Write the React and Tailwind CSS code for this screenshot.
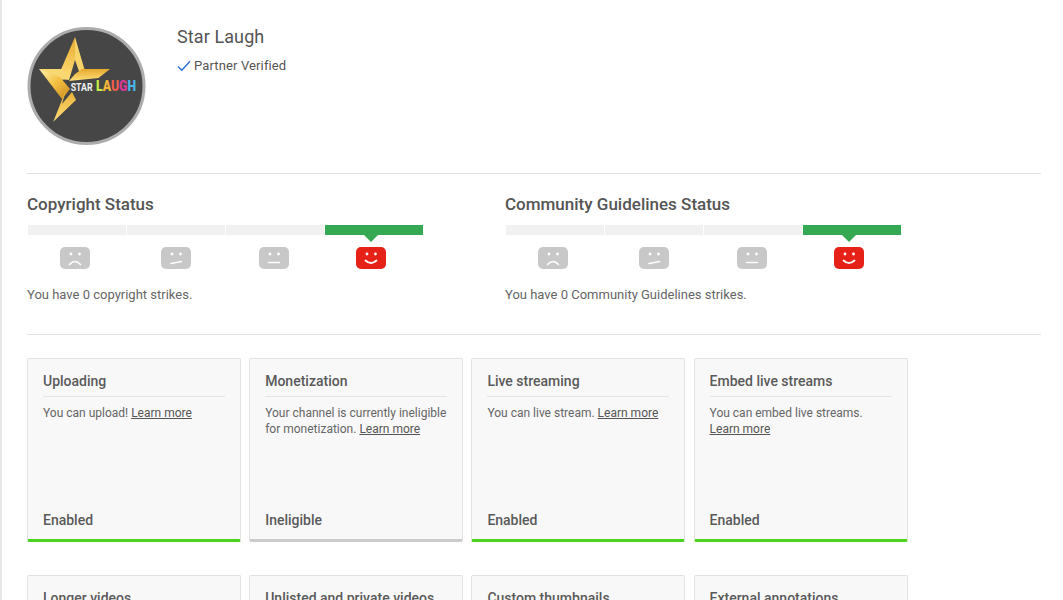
import React from "react";

const font = { fontFamily: "Roboto, sans-serif" };

// Logo del canal
const Logo = () => (
  <svg width="119" height="119" viewBox="0 0 119 119" className="block">
    <defs>
      <linearGradient id="gold" x1="0" y1="0" x2="1" y2="1">
        <stop offset="0" stopColor="#fff2b0" />
        <stop offset="0.5" stopColor="#f4c042" />
        <stop offset="1" stopColor="#c98a1c" />
      </linearGradient>
      <linearGradient id="goldDark" x1="0" y1="0" x2="0" y2="1">
        <stop offset="0" stopColor="#e6a92e" />
        <stop offset="1" stopColor="#ffdf7a" />
      </linearGradient>
    </defs>
    <circle cx="59.5" cy="59" r="57.5" fill="#464646" stroke="#acacac" strokeWidth="3" />
    <polygon points="48,10 34,42.5 31,51 42,53 48,33" fill="url(#goldDark)" />
    <polygon points="48,10 57.5,42.5 53,47 48,33" fill="#f7d46a" />
    <polygon points="55,42 83,42 71.5,51 42,54 48,47" fill="url(#goldDark)" />
    <polygon points="12,42 35,42 42,52 33,53" fill="#f8d873" />
    <polygon points="12,42 33,50 43,62 35,72" fill="url(#gold)" />
    <polygon points="40,60 26.3,94.7 49,73 45,65 35,77" fill="url(#goldDark)" />
    <text x="43.7" y="63.5" fontSize="11" fontWeight="700" fill="#f2f2f2" style={{ fontFamily: "Roboto, sans-serif" }} textLength="22" lengthAdjust="spacingAndGlyphs">STAR</text>
    <text x="69" y="64" fontSize="15" fontWeight="900" style={{ fontFamily: "Roboto, sans-serif" }} textLength="40" lengthAdjust="spacingAndGlyphs">
      <tspan fill="#c6ee48">L</tspan>
      <tspan fill="#f4b83a">A</tspan>
      <tspan fill="#ef5f4e">U</tspan>
      <tspan fill="#d8389a">G</tspan>
      <tspan fill="#4bb4e6">H</tspan>
    </text>
  </svg>
);

const bocas = {
  triste: <path d="M9.5 17.5 Q15 11.5 20.5 17.5" fill="none" stroke="#fff" strokeWidth="1.6" strokeLinecap="round" />,
  dudoso: <path d="M10 16.5 L20.5 14.5" fill="none" stroke="#fff" strokeWidth="1.6" strokeLinecap="round" />,
  neutro: <path d="M9.5 15.5 L20.5 15.5" fill="none" stroke="#fff" strokeWidth="1.6" strokeLinecap="round" />,
  feliz: <path d="M9.5 13.5 Q15 18.5 20.5 13.5" fill="none" stroke="#fff" strokeWidth="1.8" strokeLinecap="round" />,
};

const Cara = ({ tipo, className }) => (
  <svg width="30" height="22" viewBox="0 0 30 22" className={className}>
    <rect width="30" height="22" rx="5" fill={tipo === "feliz" ? "#e62117" : "#c8c8c8"} />
    <circle cx="11" cy="7" r="1.4" fill="#fff" />
    <circle cx="19.5" cy="7" r="1.4" fill="#fff" />
    {bocas[tipo]}
  </svg>
);

const Estado = ({ titulo, texto }) => (
  <div className="w-[478px]">
    <h2 className="text-[17px] leading-[20px] font-medium text-[#555]">{titulo}</h2>
    <div className="flex gap-px ml-px w-[395px] mt-[11px]">
      <div className="flex-1 h-[10px] bg-[#f1f1f1]" />
      <div className="flex-1 h-[10px] bg-[#f1f1f1]" />
      <div className="flex-1 h-[10px] bg-[#f1f1f1]" />
      <div className="flex-1 h-[10px] bg-[#34a853] relative">
        <div className="absolute left-[39px] top-[10px] w-0 h-0 border-l-[7px] border-r-[7px] border-t-[7px] border-l-transparent border-r-transparent border-t-[#34a853]" />
      </div>
    </div>
    <div className="flex mt-[12px]">
      <Cara tipo="triste" className="ml-[33px]" />
      <Cara tipo="dudoso" className="ml-[71px]" />
      <Cara tipo="neutro" className="ml-[68px]" />
      <Cara tipo="feliz" className="ml-[67px]" />
    </div>
    <p className="text-[13px] leading-[18px] text-[#666] mt-[17px]">{texto}</p>
  </div>
);

const Enlace = () => <a className="underline text-[#555]">Learn more</a>;

const Tarjeta = ({ titulo, children, estado, barra }) => (
  <div className={`w-[214px] h-[184px] flex flex-col bg-[#f8f8f8] border border-[#e2e2e2] rounded-[2px] border-b-[3px] ${barra}`}>
    <div className="mx-[15px] pt-[12px] pb-[5px] border-b border-[#e4e4e4] text-[14px] leading-[20px] font-medium text-[#5a5a5a]">
      {titulo}
    </div>
    <p className="mx-[15px] mt-[8px] text-[12px] leading-[16px] text-[#666] flex-1">{children}</p>
    <div className="mx-[15px] mb-[9px] text-[14px] leading-[20px] font-medium text-[#5a5a5a]">{estado}</div>
  </div>
);

const App = () => {
  return (
    <div className="w-[1063px] h-[600px] overflow-hidden bg-white flex" style={font}>
      {/* Franja lateral */}
      <div className="w-[2px] bg-[#e8e8e8] shrink-0" />

      <div className="flex-1 pl-[25px] pr-[22px]">
        {/* Cabecera del canal */}
        <div className="flex h-[174px] pt-[27px] border-b border-[#e2e2e2]">
          <Logo />
          <div className="ml-[31px]">
            <div className="text-[18px] leading-[22px] text-[#555] -mt-[1px] tracking-[0.1px]">Star Laugh</div>
            <div className="flex items-center mt-[9px] text-[13px] leading-[18px] text-[#555] tracking-[0.13px]">
              <svg width="14" height="12" viewBox="0 0 14 12" className="mr-[3px]">
                <path d="M1 6.5 L4.8 10.2 L13 1.2" fill="none" stroke="#2a6bd2" strokeWidth="1.3" />
              </svg>
              Partner Verified
            </div>
          </div>
        </div>

        {/* Estado de copyright y normas */}
        <div className="flex h-[161px] pt-[20px] border-b border-[#e2e2e2]">
          <Estado titulo="Copyright Status" texto="You have 0 copyright strikes." />
          <Estado titulo="Community Guidelines Status" texto="You have 0 Community Guidelines strikes." />
        </div>

        {/* Funciones */}
        <div className="grid grid-cols-[214px_214px_214px_214px] gap-x-[8.2px] gap-y-[33px] mt-[23px]">
          <Tarjeta titulo="Uploading" estado="Enabled" barra="border-b-[#4cd31c]">
            You can upload! <Enlace />
          </Tarjeta>
          <Tarjeta titulo="Monetization" estado="Ineligible" barra="border-b-[#cccccc]">
            Your channel is currently ineligible for monetization. <Enlace />
          </Tarjeta>
          <Tarjeta titulo="Live streaming" estado="Enabled" barra="border-b-[#4cd31c]">
            You can live stream. <Enlace />
          </Tarjeta>
          <Tarjeta titulo="Embed live streams" estado="Enabled" barra="border-b-[#4cd31c]">
            You can embed live streams. <Enlace />
          </Tarjeta>
          <Tarjeta titulo="Longer videos" estado="Enabled" barra="border-b-[#4cd31c]" />
          <Tarjeta titulo="Unlisted and private videos" estado="Enabled" barra="border-b-[#4cd31c]" />
          <Tarjeta titulo="Custom thumbnails" estado="Enabled" barra="border-b-[#4cd31c]" />
          <Tarjeta titulo="External annotations" estado="Enabled" barra="border-b-[#4cd31c]" />
        </div>
      </div>
    </div>
  );
};

export default App;
